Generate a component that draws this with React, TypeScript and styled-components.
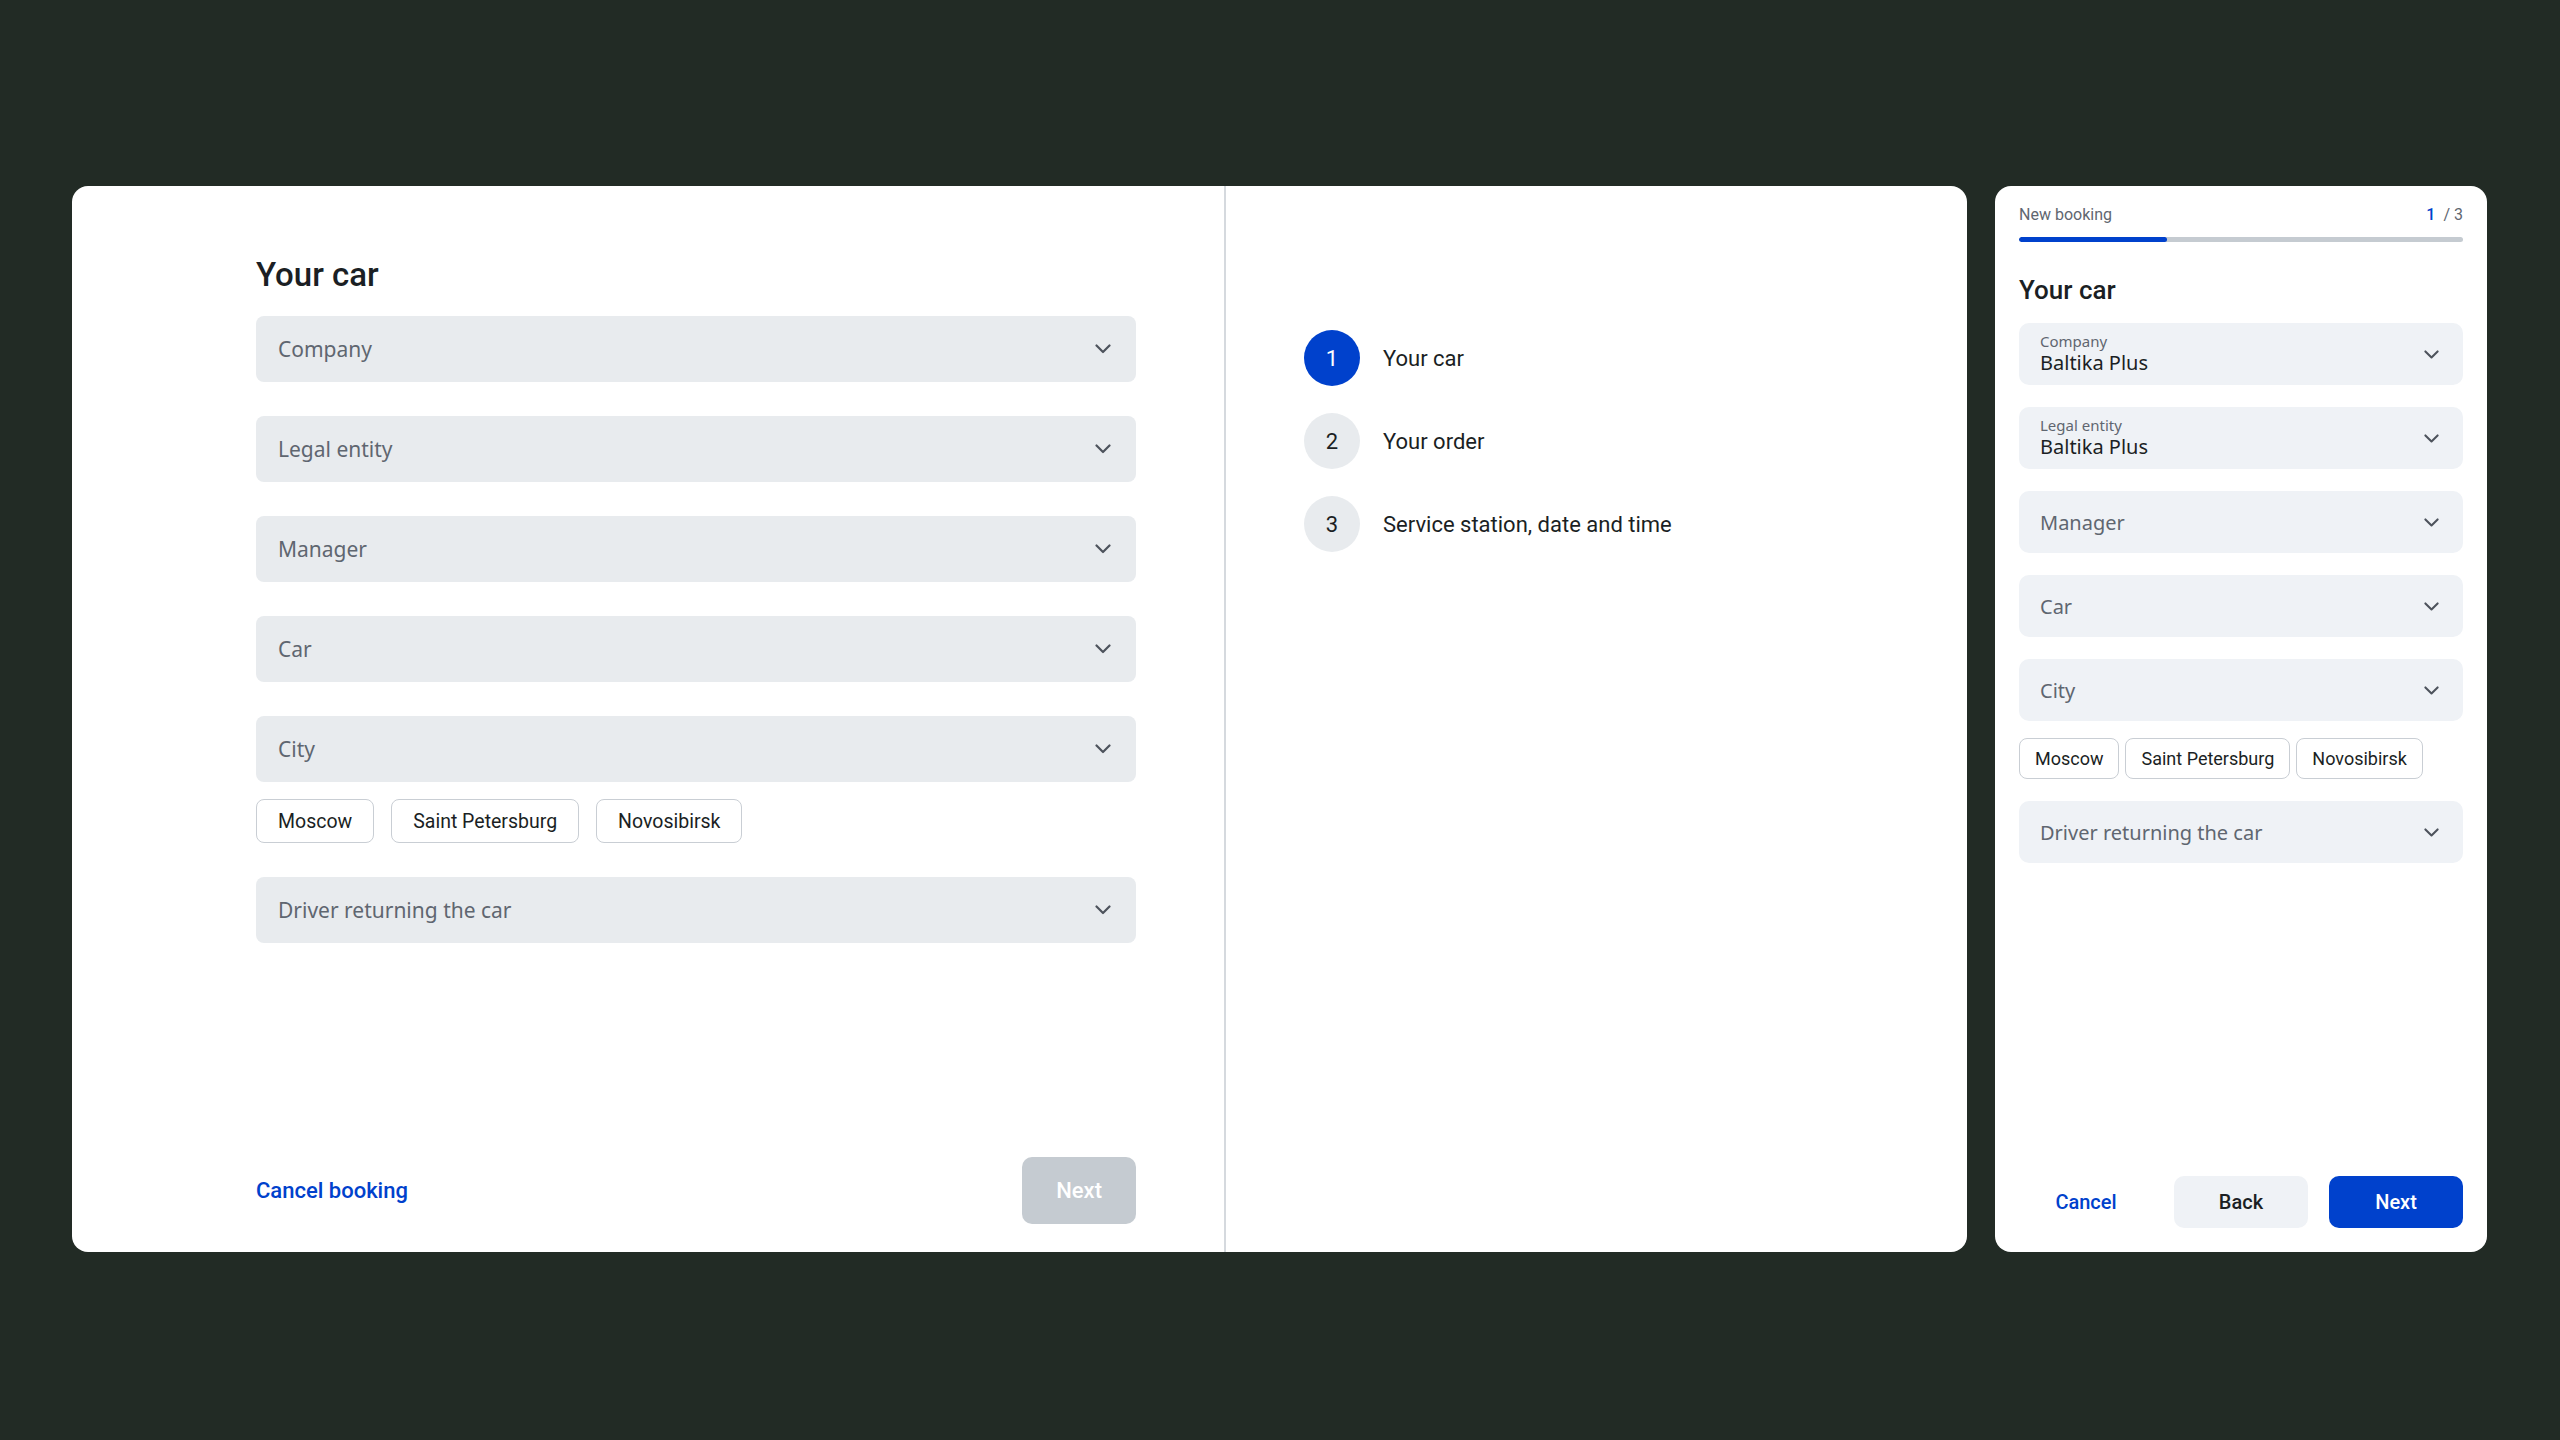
import React from 'react'
import styled, { createGlobalStyle } from 'styled-components'

const blue = '#0041cc'
const ink = '#1b1f24'
const muted = '#5f6670'

const GlobalStyle = createGlobalStyle`
  html, body {
    margin: 0;
    padding: 0;
    background: #222b25;
  }
  * {
    box-sizing: border-box;
  }
`

const Screen = styled.div`
  width: 2560px;
  height: 1440px;
  display: flex;
  align-items: flex-start;
  gap: 28px;
  padding: 186px 72px 0;
  font-family: Roboto, 'Liberation Sans', sans-serif;
  color: ${ink};
`

const DesktopCard = styled.div`
  width: 1895px;
  height: 1066px;
  background: #fff;
  border-radius: 16px;
  display: flex;
  overflow: hidden;
`

const FormPane = styled.div`
  width: 1154px;
  display: flex;
  flex-direction: column;
  padding: 69px 88px 28px 184px;
  border-right: 2px solid #d5d9de;
`

const Title = styled.h1<{ $small?: boolean }>`
  margin: 0;
  font-weight: 500;
  font-size: ${p => (p.$small ? '26px' : '33px')};
  line-height: ${p => (p.$small ? '32px' : '40px')};
  color: ${ink};
`

const Fields = styled.div<{ $gap: number }>`
  display: flex;
  flex-direction: column;
  gap: ${p => p.$gap}px;
`

const FieldGroup = styled.div<{ $gap: number }>`
  display: flex;
  flex-direction: column;
  gap: ${p => p.$gap}px;
`

const Select = styled.div<{ $compact?: boolean }>`
  height: ${p => (p.$compact ? '62px' : '66px')};
  border-radius: ${p => (p.$compact ? '10px' : '8px')};
  background: ${p => (p.$compact ? '#eff2f6' : '#e8ebee')};
  display: flex;
  align-items: center;
  justify-content: space-between;
  padding: ${p => (p.$compact ? '0 24px 0 21px' : '0 25px 0 22px')};
  font-family: 'Noto Sans', 'Open Sans', sans-serif;
  font-size: ${p => (p.$compact ? '20px' : '21px')};
  color: ${muted};
`

const SelectValue = styled.div`
  display: flex;
  flex-direction: column;
`

const SelectLabel = styled.span`
  font-size: 15px;
  line-height: 18px;
  color: ${muted};
`

const SelectText = styled.span`
  font-size: 20px;
  line-height: 26px;
  color: ${ink};
`

const Chips = styled.div<{ $gap: number }>`
  display: flex;
  gap: ${p => p.$gap}px;
`

const Chip = styled.button<{ $compact?: boolean }>`
  height: ${p => (p.$compact ? '41px' : '44px')};
  padding: ${p => (p.$compact ? '0 15px' : '0 21px')};
  border: 1.5px solid #c9ced4;
  border-radius: 8px;
  background: #fff;
  font-family: Roboto, 'Liberation Sans', sans-serif;
  font-size: ${p => (p.$compact ? '18px' : '19.5px')};
  color: ${ink};
`

const Footer = styled.div`
  margin-top: auto;
  display: flex;
  align-items: center;
  justify-content: space-between;
`

const LinkButton = styled.button<{ $wide?: boolean }>`
  border: none;
  background: none;
  padding: 0;
  font-family: Roboto, 'Liberation Sans', sans-serif;
  font-weight: 500;
  font-size: ${p => (p.$wide ? '22px' : '20px')};
  color: ${blue};
  height: ${p => (p.$wide ? 'auto' : '52px')};
`

const Button = styled.button<{ $variant: 'primary' | 'secondary' | 'disabled' }>`
  border: none;
  border-radius: 10px;
  font-family: Roboto, 'Liberation Sans', sans-serif;
  font-weight: 500;
  background: ${p =>
    p.$variant === 'primary' ? blue : p.$variant === 'secondary' ? '#eff2f6' : '#c5cbd1'};
  color: ${p => (p.$variant === 'secondary' ? ink : '#fff')};
`

const BigButton = styled(Button)`
  height: 67px;
  padding: 0 34px;
  font-size: 22px;
`

const StepsPane = styled.div`
  flex: 1;
  padding: 144px 0 0 78px;
  display: flex;
  flex-direction: column;
  gap: 27px;
`

const Step = styled.div`
  display: flex;
  align-items: center;
  gap: 23px;
  font-size: 22px;
`

const StepBadge = styled.div<{ $active?: boolean }>`
  width: 56px;
  height: 56px;
  border-radius: 50%;
  display: flex;
  align-items: center;
  justify-content: center;
  background: ${p => (p.$active ? blue : '#e8ebee')};
  color: ${p => (p.$active ? '#fff' : ink)};
  font-size: 22px;
`

const MobileCard = styled.div`
  width: 492px;
  height: 1066px;
  background: #fff;
  border-radius: 16px;
  display: flex;
  flex-direction: column;
  padding: 19px 24px 24px;
`

const Header = styled.div`
  display: flex;
  justify-content: space-between;
  font-size: 16px;
  line-height: 20px;
  color: ${muted};
`

const Counter = styled.span`
  b {
    color: ${blue};
    font-weight: 500;
    margin-right: 8px;
  }
`

const Progress = styled.div`
  margin: 12px 0 32px;
  height: 5px;
  border-radius: 3px;
  background: #c5cbd1;
  overflow: hidden;
`

const ProgressFill = styled.div`
  height: 100%;
  background: ${blue};
  border-radius: 3px;
`

const MobileFooter = styled.div`
  margin-top: auto;
  display: grid;
  grid-template-columns: repeat(3, 1fr);
  gap: 21px;
`

const SmallButton = styled(Button)`
  height: 52px;
  font-size: 20px;
`

const Chevron = ({ size = 16 }: { size?: number }) => (
  <svg width={size} height={size * 0.6} viewBox="0 0 16 9.6" fill="none">
    <path
      d="M1.5 1.5 L8 8 L14.5 1.5"
      stroke="#4d535c"
      strokeWidth="2.2"
      strokeLinecap="round"
      strokeLinejoin="round"
    />
  </svg>
)

const cities = ['Moscow', 'Saint Petersburg', 'Novosibirsk']
const steps = ['Your car', 'Your order', 'Service station, date and time']

const Field = ({ label, value, compact }: { label: string; value?: string; compact?: boolean }) => (
  <Select $compact={compact}>
    {value ? (
      <SelectValue>
        <SelectLabel>{label}</SelectLabel>
        <SelectText>{value}</SelectText>
      </SelectValue>
    ) : (
      <span>{label}</span>
    )}
    <Chevron size={compact ? 15 : 16} />
  </Select>
)

export default function App() {
  const progress = 1 / 3

  return (
    <>
      <GlobalStyle />
      <Screen>
        <DesktopCard>
          <FormPane>
            <Title>Your car</Title>
            <Fields $gap={34} style={{ marginTop: 21 }}>
              <Field label="Company" />
              <Field label="Legal entity" />
              <Field label="Manager" />
              <Field label="Car" />
              <FieldGroup $gap={17}>
                <Field label="City" />
                <Chips $gap={17}>
                  {cities.map(c => (
                    <Chip key={c}>{c}</Chip>
                  ))}
                </Chips>
              </FieldGroup>
              <Field label="Driver returning the car" />
            </Fields>
            <Footer>
              <LinkButton $wide>Cancel booking</LinkButton>
              <BigButton $variant="disabled">Next</BigButton>
            </Footer>
          </FormPane>
          <StepsPane>
            {steps.map((s, i) => (
              <Step key={s}>
                <StepBadge $active={i === 0}>{i + 1}</StepBadge>
                {s}
              </Step>
            ))}
          </StepsPane>
        </DesktopCard>

        <MobileCard>
          <Header>
            <span>New booking</span>
            <Counter>
              <b>1</b>/ 3
            </Counter>
          </Header>
          <Progress>
            <ProgressFill style={{ width: `${progress * 100}%` }} />
          </Progress>
          <Title $small>Your car</Title>
          <Fields $gap={22} style={{ marginTop: 17 }}>
            <Field compact label="Company" value="Baltika Plus" />
            <Field compact label="Legal entity" value="Baltika Plus" />
            <Field compact label="Manager" />
            <Field compact label="Car" />
            <FieldGroup $gap={17}>
              <Field compact label="City" />
              <Chips $gap={6}>
                {cities.map(c => (
                  <Chip key={c} $compact>
                    {c}
                  </Chip>
                ))}
              </Chips>
            </FieldGroup>
            <Field compact label="Driver returning the car" />
          </Fields>
          <MobileFooter>
            <LinkButton>Cancel</LinkButton>
            <SmallButton $variant="secondary">Back</SmallButton>
            <SmallButton $variant="primary">Next</SmallButton>
          </MobileFooter>
        </MobileCard>
      </Screen>
    </>
  )
}
